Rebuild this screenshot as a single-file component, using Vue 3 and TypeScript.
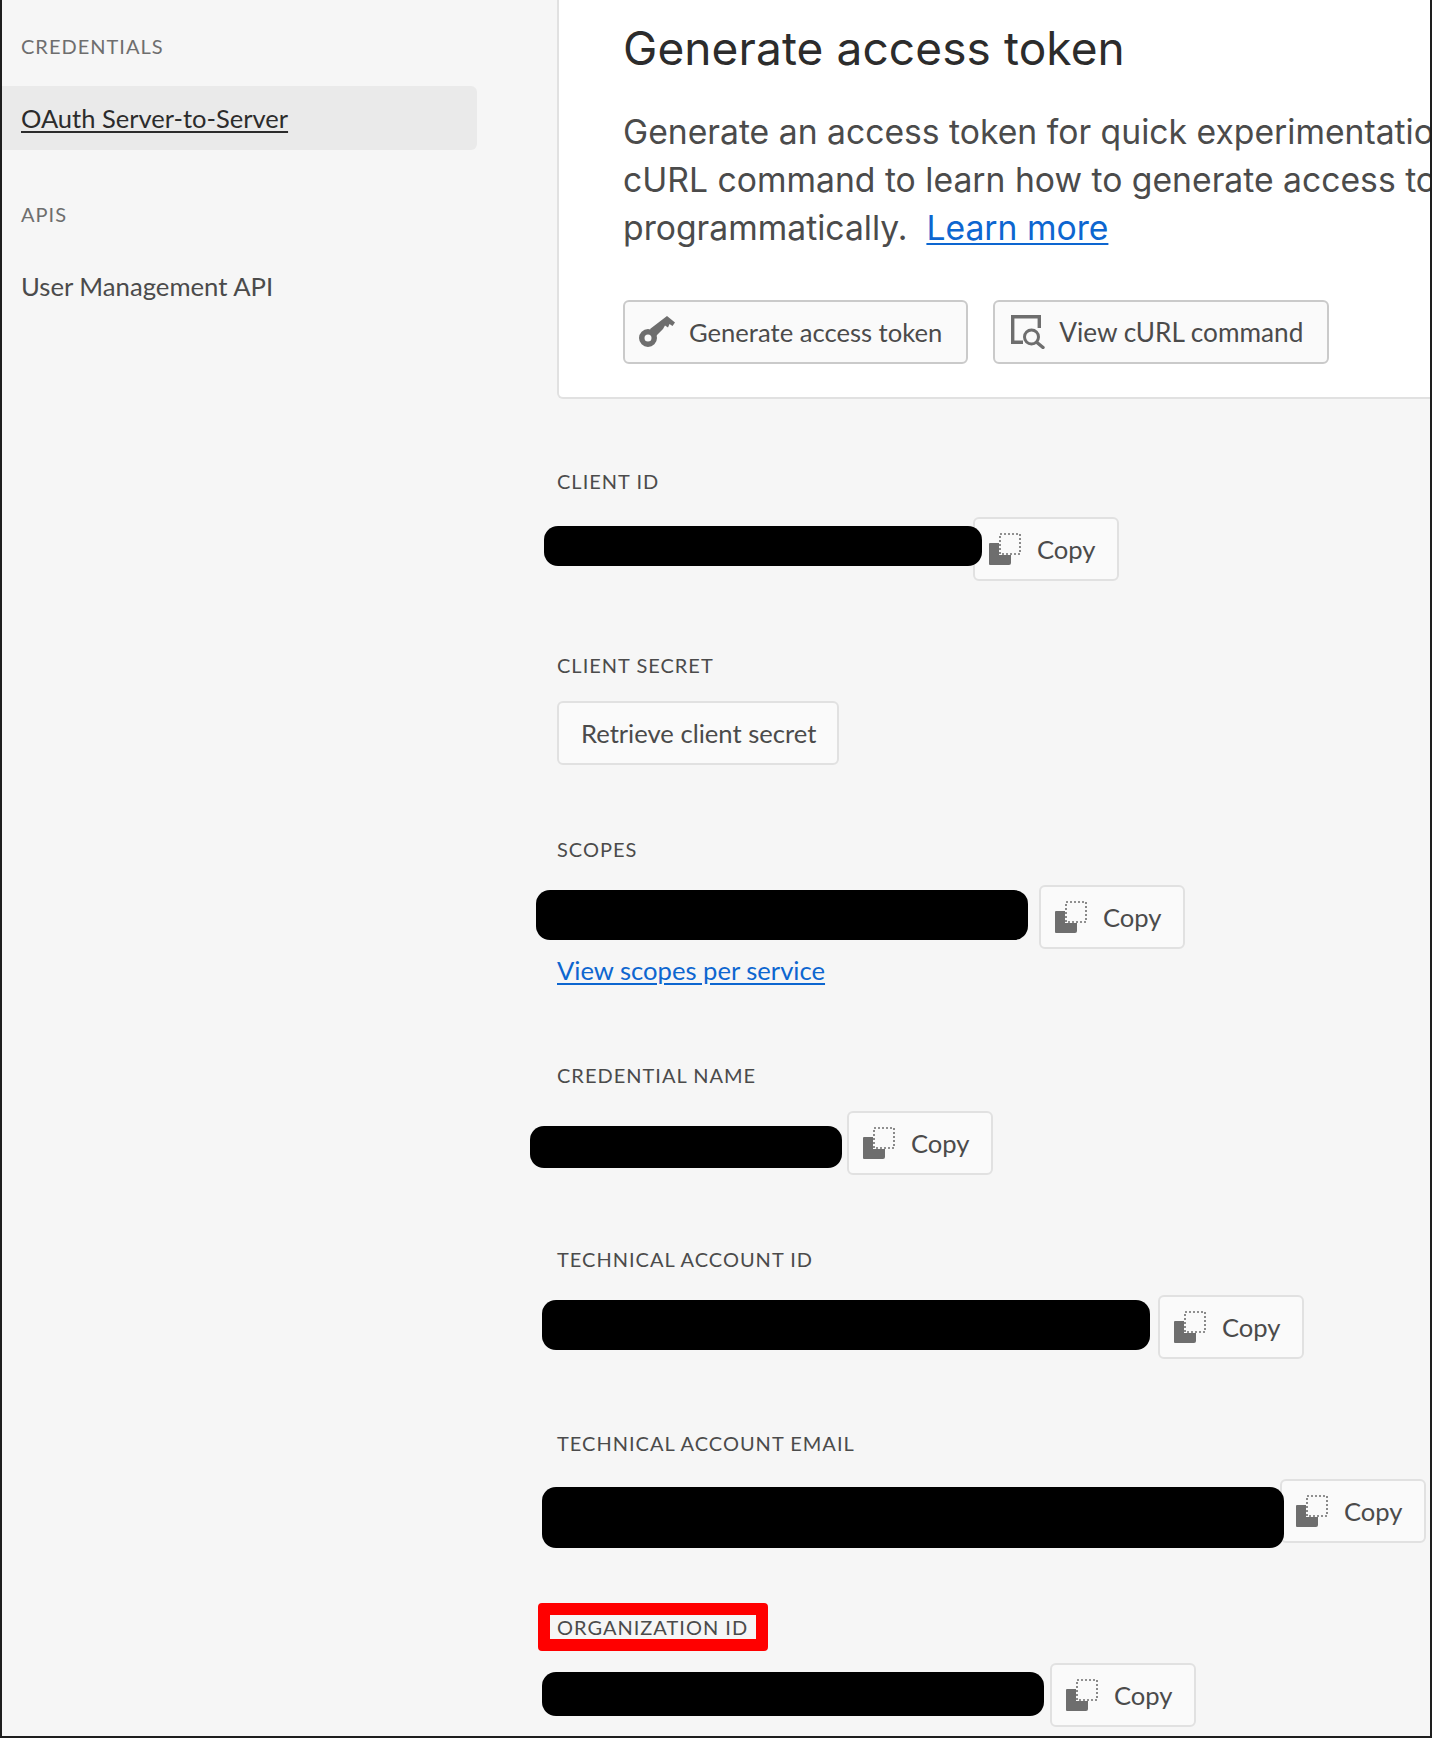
<script setup lang="ts">
interface Field {
  label: string
  annotated?: boolean
  link?: string
  bar?: { left: number; width: number; height: number; top: number; gap: number }
  action?: string
}

const fields: Field[] = [
  { label: 'CLIENT ID', bar: { left: -13, width: 438, height: 40, top: 9, gap: -9 } },
  { label: 'CLIENT SECRET', action: 'Retrieve client secret' },
  { label: 'SCOPES', link: 'View scopes per service', bar: { left: -21, width: 492, height: 50, top: 5, gap: 11 } },
  { label: 'CREDENTIAL NAME', bar: { left: -27, width: 312, height: 42, top: 15, gap: 5 } },
  { label: 'TECHNICAL ACCOUNT ID', bar: { left: -15, width: 608, height: 50, top: 5, gap: 8 } },
  { label: 'TECHNICAL ACCOUNT EMAIL', bar: { left: -15, width: 742, height: 61, top: 8, gap: -4 } },
  { label: 'ORGANIZATION ID', annotated: true, bar: { left: -15, width: 502, height: 44, top: 9, gap: 6 } },
]

function barStyle(b: NonNullable<Field['bar']>) {
  return {
    marginLeft: b.left + 'px',
    marginRight: b.gap + 'px',
    marginTop: b.top + 'px',
    width: b.width + 'px',
    height: b.height + 'px',
  }
}
</script>

<template>
  <div class="page">
    <aside class="sidebar">
      <h3 class="side-title first">CREDENTIALS</h3>
      <a class="side-item active">OAuth Server-to-Server</a>
      <h3 class="side-title second">APIS</h3>
      <a class="side-item">User Management API</a>
    </aside>

    <main class="main">
      <section class="card">
        <h1 class="card-title">Generate access token</h1>
        <p class="card-text">
          Generate an access token for quick experimentation, or view the<br />
          cURL command to learn how to generate access tokens<br />
          programmatically.&nbsp; <a class="learn">Learn more</a>
        </p>
        <div class="card-actions">
          <button class="btn btn-strong" type="button">
            <svg class="icon-key" width="36" height="32" viewBox="0 0 36 32" aria-hidden="true">
              <path fill="#6e6e6e" fill-rule="evenodd" d="M9 13a9 9 0 1 1 0 18 9 9 0 0 1 0-18zm0 5.500a3.500 3.500 0 1 0 0 7 3.500 3.500 0 0 0 0-7z" />
              <path fill="#6e6e6e" d="M11 13L28 0l8 6.500-2.500 3.500-3-2-1.500 3.500-3-2-2 3.500-9 9z" />
            </svg>
            <span>Generate access token</span>
          </button>
          <button class="btn btn-strong btn-view" type="button">
            <svg class="icon-view" width="34" height="34" viewBox="0 0 34 34" aria-hidden="true">
              <path fill="none" stroke="#6e6e6e" stroke-width="3.400" d="M12 27.300H1.700V1.700h26.600V13" />
              <circle cx="20.500" cy="22" r="7" fill="none" stroke="#6e6e6e" stroke-width="3" />
              <path fill="none" stroke="#6e6e6e" stroke-width="3.400" stroke-linecap="round" d="M26 27.500l6 5" />
            </svg>
            <span>View cURL command</span>
          </button>
        </div>
      </section>

      <div v-for="f in fields" :key="f.label" class="field">
        <div class="label-wrap">
          <span class="label">{{ f.label }}</span>
          <span v-if="f.annotated" class="annotation"></span>
        </div>
        <div class="row">
          <div v-if="f.bar" class="redact" :style="barStyle(f.bar)"></div>
          <button class="btn btn-plain" type="button">
            <svg v-if="f.bar" class="icon-copy" width="32" height="32" viewBox="0 0 32 32" aria-hidden="true">
              <path fill="#6e6e6e" d="M1 10h9v12h12v8a2 2 0 0 1-2 2H1a1 1 0 0 1-1-1V11a1 1 0 0 1 1-1z" />
              <rect x="11" y="1" width="20" height="20" fill="none" stroke="#6e6e6e" stroke-width="1.600" stroke-dasharray="2 2" />
            </svg>
            <span>{{ f.action ?? 'Copy' }}</span>
          </button>
        </div>
        <a v-if="f.link" class="scope-link">{{ f.link }}</a>
      </div>
    </main>
  </div>
</template>

<style>
html,
body {
  margin: 0;
  background: #f6f6f6;
}
</style>

<style scoped>
.page {
  box-sizing: border-box;
  width: 1432px;
  height: 1738px;
  display: flex;
  overflow: hidden;
  background: #f6f6f6;
  border-left: 2px solid #1e1e1e;
  border-right: 2px solid #1e1e1e;
  border-bottom: 2px solid #1e1e1e;
  font-family: Lato, "Open Sans", sans-serif;
  color: #4b4b4b;
}
.sidebar {
  flex: 0 0 475px;
}
.side-title {
  margin: 0;
  padding-left: 19px;
  font-size: 20px;
  line-height: 24px;
  font-weight: 400;
  letter-spacing: 1px;
  color: #6e6e6e;
}
.side-title.first {
  margin-top: 34px;
}
.side-title.second {
  margin-top: 52px;
}
.side-item {
  display: flex;
  align-items: center;
  height: 64px;
  margin-top: 28px;
  padding-left: 19px;
  border-radius: 0 6px 6px 0;
  font-size: 25.700px;
  color: #4b4b4b;
}
.side-item.active {
  background: #eaeaea;
  color: #2c2c2c;
  font-size: 25.500px;
  text-decoration: underline;
  text-underline-offset: 3px;
  text-decoration-thickness: 2px;
}
.main {
  flex: 1;
  min-width: 0;
  padding-left: 30px;
  margin-left: 50px;
  overflow: hidden;
}
.card {
  box-sizing: border-box;
  width: 1100px;
  padding: 20px 0 33px 64px;
  background: #fff;
  border: 2px solid #e1e1e1;
  border-top: 0;
  border-radius: 0 0 6px 6px;
  font-family: Inter, Roboto, sans-serif;
}
.card-title {
  margin: 0;
  font-size: 46px;
  line-height: 56px;
  font-weight: 400;
  letter-spacing: 0.1px;
  color: #2c2c2c;
}
.card-text {
  margin: 32px 0 0;
  font-size: 33.700px;
  line-height: 48px;
  color: #4b4b4b;
  white-space: nowrap;
}
.learn {
  color: #0d66d0;
  text-decoration: underline;
  text-underline-offset: 3px;
  text-decoration-thickness: 2px;
}
.card-actions {
  display: flex;
  gap: 25px;
  margin-top: 48px;
}
.btn {
  box-sizing: border-box;
  display: inline-flex;
  align-items: center;
  height: 64px;
  padding: 0 24px 0 14px;
  background: #fafafa;
  border: 2px solid #e1e1e1;
  border-radius: 6px;
  font-family: Lato, "Open Sans", sans-serif;
  font-size: 25.600px;
  color: #4b4b4b;
  white-space: nowrap;
}
.btn-strong {
  border-color: #cacaca;
}
.btn-view {
  padding-left: 16px;
  font-size: 26.200px;
}
.btn-plain {
  padding-right: 21px;
}
.btn:not(:has(svg)) {
  padding-left: 22px;
}
.icon-key,
.icon-view {
  margin-right: 14px;
}
.icon-copy {
  margin-right: 16px;
  flex: none;
}
.field {
  margin-top: 70px;
}
.field + .field {
  margin-top: 72px;
}
.label-wrap {
  position: relative;
  display: flex;
  height: 24px;
  margin-bottom: 24px;
}
.label {
  position: relative;
  z-index: 1;
  font-size: 20px;
  line-height: 24px;
  letter-spacing: 1px;
  color: #4b4b4b;
}
.annotation {
  position: absolute;
  left: -19px;
  top: -12px;
  width: 206px;
  height: 24px;
  border: 12px solid #f00;
  border-radius: 4px;
}
.row {
  display: flex;
  align-items: flex-start;
}
.redact {
  position: relative;
  z-index: 1;
  flex: none;
  margin-bottom: -24px;
  background: #000;
  border-radius: 14px;
}
.row .btn {
  flex: none;
}
.scope-link {
  display: block;
  margin-top: 6px;
  padding-bottom: 6px;
  font-size: 25.600px;
  line-height: 30px;
  color: #0d66d0;
  text-decoration: underline;
  text-underline-offset: 3px;
}
</style>
